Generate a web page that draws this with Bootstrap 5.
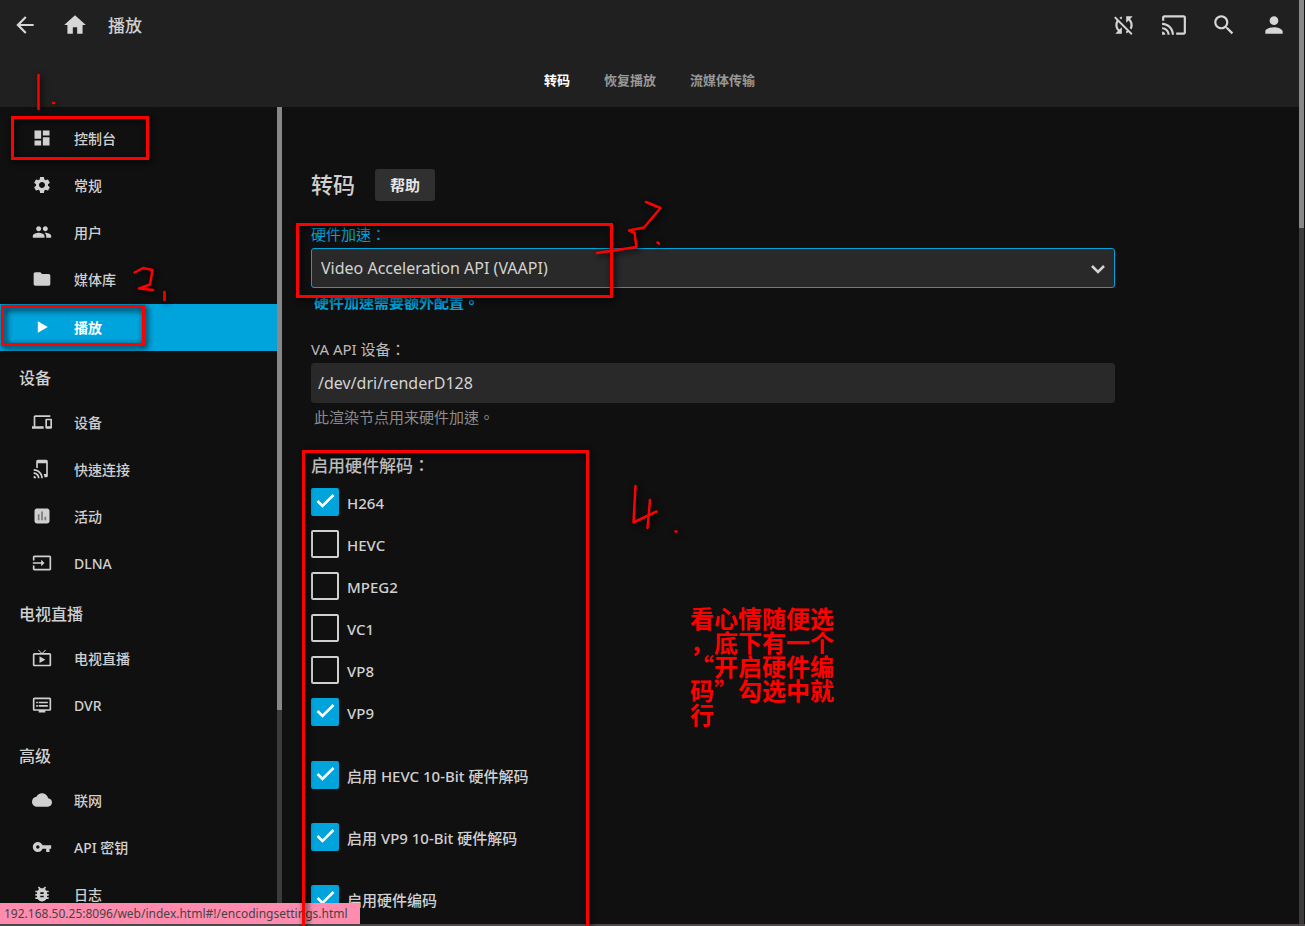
<!DOCTYPE html>
<html lang="zh-TW">
<head>
<meta charset="utf-8">
<meta name="viewport" content="width=device-width, initial-scale=1">
<title>播放</title>
<link href="https://cdn.jsdelivr.net/npm/bootstrap@5.3.0/dist/css/bootstrap.min.css" rel="stylesheet">
<script src="https://cdn.jsdelivr.net/npm/bootstrap@5.3.0/dist/js/bootstrap.bundle.min.js"></script>
<style>
  :root { --accent: #00a4dc; --ink: #d0d0d0; --field: #292929; }
  body { font-family: "Noto Sans", "Noto Sans CJK TC", sans-serif; background: #101010; color: var(--ink); font-size: 15px; line-height: 20px; }
  svg.ico { fill: currentColor; display: block; flex: none; }
  .topbar { background: #202020; height: 107px; }
  .topbar .tool { display: grid; place-items: center; width: 50px; height: 49px; background: none; border: 0; color: #d6d6d6; }
  .topbar h1 { font-size: 17px; line-height: 24px; padding-top: 3px; }
  .tabs a { color: #989898; font-size: 13px; font-weight: 700; padding: 21px 17px 0; text-decoration: none; }
  .tabs a.active { color: #fff; }
  .side { width: 277px; padding-top: 8px; }
  .side a { height: 47px; padding-left: 32px; gap: 22px; color: var(--ink); font-size: 14px; font-weight: 500; text-decoration: none; }
  .side a svg { margin-bottom: 2px; }
  .side a.active { background: var(--accent); color: #fff; font-weight: 700; margin-top: 1px; }
  .side h2 { height: 48px; margin: 0; padding: 6px 0 0 19px; font-size: 16px; font-weight: 500; line-height: 42px; }
  .track { width: 5px; background: #3b3b3b; flex: none; }
  .thumb { background: #888; }
  .thumb-side { height: 603px; }
  .thumb-page { height: 228px; }
  .edge { width: 1px; background: #111; flex: none; }
  .settings { padding: 62px 29px 0; }
  .settings form { max-width: 804px; }
  .settings h2 { font-size: 22px; font-weight: 500; line-height: 30px; }
  .btn-help { background: #303030; color: #e6e6e6; border: 0; border-radius: 3px; font-size: 15px; font-weight: 700; line-height: 20px; padding: 6px 15px; }
  .field-first { margin-top: 23px; }
  .field { margin-bottom: 27px; }
  .field label { display: block; margin-bottom: 4px; color: #bbb; }
  .field.focus label, .field.focus .hint { color: var(--accent); }
  .field.focus .hint { font-weight: 700; }
  .field .box { display: block; width: 100%; height: 40px; background: var(--field); color: #d4d4d4; border: 1px solid var(--field); border-radius: 3px; font-size: 16px; padding: 0 6px; outline: 0; appearance: none; }
  .field.focus .box { border-color: var(--accent); padding: 0 9px; }
  .chev { right: 9px; top: 13px; }
  .hint { margin: 4px 0 0 3px; color: #8c8c8c; }
  legend { font-size: 17px; font-weight: 500; line-height: 20px; margin: 2px 0 12px; color: #bdbdbd; }
  .codec { height: 28px; margin-bottom: 14px; gap: 8px; }
  .codec input { appearance: none; width: 28px; height: 28px; flex: none; margin: 0; border: 2px solid var(--ink); border-radius: 2px; }
  .codec input:checked { border: 0; background: var(--accent) url("data:image/svg+xml,%3Csvg xmlns='http://www.w3.org/2000/svg' viewBox='0 0 28 28'%3E%3Cpath d='M6.5 13l5 5L22.500 7' fill='none' stroke='%23fff' stroke-width='2.500'/%3E%3C/svg%3E"); }
  .codec label { padding-top: 2px; font-weight: 500; }
  .codecs { margin-bottom: 21px; }
  .codec.wide { margin-bottom: 34px; }
  .statusline { left: 0; bottom: 0; width: 100%; height: 2px; background: #4c484a; }
  .linktip { left: 0; bottom: 2px; min-width: 360px; background: #ff8cae; color: #444; font-size: 12px; line-height: 21px; padding: 0 7px 0 4px; white-space: nowrap; }
  .marks { left: 0; top: 0; width: 700px; height: 100%; pointer-events: none; fill: none; stroke: #f00; stroke-width: 3px; stroke-linecap: round; stroke-linejoin: round; filter: drop-shadow(2px 2px 3px #000); }
  .note { left: 690px; top: 606px; color: #f00; font: 700 24px/24px "Noto Sans CJK SC", sans-serif; white-space: nowrap; }
</style>
</head>
<body class="vh-100 overflow-hidden position-relative d-flex">

<div class="flex-grow-1 d-flex flex-column vh-100">
  <header class="topbar flex-shrink-0">
    <div class="d-flex align-items-center">
      <button class="tool p-0" aria-label="返回"><svg class="ico" width="26" height="26" viewBox="0 0 24 24"><path d="M20 11H7.830l5.590-5.590L12 4l-8 8 8 8 1.410-1.410L7.830 13H20z"/></svg></button>
      <button class="tool p-0" aria-label="首页"><svg class="ico" width="26" height="26" viewBox="0 0 24 24"><path d="M10 20v-6h4v6h5v-8h3L12 3 2 12h3v8z"/></svg></button>
      <h1 class="mb-0 ms-2 flex-grow-1 fw-medium">播放</h1>
      <button class="tool p-0" aria-label="同步播放"><svg class="ico" width="26" height="26" viewBox="0 0 24 24"><path d="M10 6.350V4.260c-.8.210-1.550.540-2.230.960l1.460 1.460c.250-.120.500-.240.770-.330zm-7.140-.940l2.360 2.360C4.450 8.990 4 10.440 4 12c0 2.210.910 4.200 2.360 5.640L4 20h6v-6l-2.240 2.240C6.680 15.150 6 13.660 6 12c0-1 .250-1.940.680-2.770l8.080 8.080c-.250.130-.500.250-.770.340v2.090c.8-.210 1.550-.540 2.230-.960l2.360 2.360 1.270-1.270L4.140 4.140 2.860 5.410zM20 4h-6v6l2.240-2.240C17.320 8.850 18 10.340 18 12c0 1-.250 1.940-.680 2.770l1.460 1.460C19.550 15.010 20 13.560 20 12c0-2.210-.910-4.200-2.360-5.640L20 4z"/></svg></button>
      <button class="tool p-0" aria-label="投屏"><svg class="ico" width="26" height="26" viewBox="0 0 24 24"><path d="M21 3H3c-1.100 0-2 .9-2 2v3h2V5h18v14h-7v2h7c1.100 0 2-.9 2-2V5c0-1.100-.9-2-2-2zM1 18v3h3c0-1.660-1.340-3-3-3zm0-4v2c2.760 0 5 2.240 5 5h2c0-3.870-3.130-7-7-7zm0-4v2c4.970 0 9 4.030 9 9h2c0-6.080-4.930-11-11-11z"/></svg></button>
      <button class="tool p-0" aria-label="搜索"><svg class="ico" width="26" height="26" viewBox="0 0 24 24"><path d="M15.500 14h-.790l-.280-.270C15.410 12.590 16 11.110 16 9.500 16 5.910 13.090 3 9.500 3S3 5.910 3 9.500 5.910 16 9.500 16c1.610 0 3.090-.590 4.230-1.570l.270.280v.790l5 4.990L20.490 19l-4.990-5zm-6 0C7.010 14 5 11.990 5 9.500S7.010 5 9.500 5 14 7.010 14 9.500 11.990 14 9.500 14z"/></svg></button>
      <button class="tool p-0" aria-label="用户"><svg class="ico" width="26" height="26" viewBox="0 0 24 24"><path d="M12 12c2.210 0 4-1.790 4-4s-1.790-4-4-4-4 1.790-4 4 1.790 4 4 4zm0 2c-2.670 0-8 1.340-8 4v2h16v-2c0-2.660-5.330-4-8-4z"/></svg></button>
    </div>
    <nav class="tabs d-flex justify-content-center">
      <a href="#" class="active">转码</a><a href="#">恢复播放</a><a href="#">流媒体传输</a>
    </nav>
  </header>

  <div class="d-flex flex-grow-1 overflow-hidden">
    <nav class="side flex-shrink-0 overflow-hidden">
      <a href="#" class="d-flex align-items-center"><svg class="ico" width="20" height="20" viewBox="0 0 24 24"><path d="M3 13h8V3H3v10zm0 8h8v-6H3v6zm10 0h8V11h-8v10zm0-18v6h8V3h-8z"/></svg>控制台</a>
      <a href="#" class="d-flex align-items-center"><svg class="ico" width="20" height="20" viewBox="0 0 24 24"><path d="M19.140 12.940c.040-.3.060-.610.060-.940 0-.320-.020-.640-.070-.940l2.030-1.580c.180-.140.230-.410.120-.610l-1.920-3.320c-.120-.220-.370-.290-.590-.220l-2.390.960c-.5-.380-1.030-.7-1.620-.940l-.360-2.540c-.040-.240-.240-.410-.480-.410h-3.840c-.240 0-.430.170-.470.410l-.360 2.540c-.590.240-1.130.570-1.620.940l-2.390-.960c-.220-.080-.470 0-.590.220L2.740 8.870c-.120.210-.080.470.120.610l2.030 1.580c-.050.3-.090.630-.090.940s.020.640.070.940l-2.030 1.580c-.180.140-.230.410-.120.610l1.920 3.320c.120.220.370.290.590.220l2.390-.960c.5.380 1.030.7 1.620.940l.360 2.540c.050.240.240.410.480.410h3.840c.240 0 .440-.170.470-.410l.360-2.540c.590-.240 1.130-.560 1.620-.940l2.390.960c.220.080.470 0 .590-.220l1.920-3.320c.120-.220.070-.470-.120-.610l-2.010-1.580zM12 15.600c-1.980 0-3.600-1.620-3.600-3.600s1.620-3.600 3.600-3.600 3.600 1.620 3.600 3.600-1.620 3.600-3.600 3.600z"/></svg>常规</a>
      <a href="#" class="d-flex align-items-center"><svg class="ico" width="20" height="20" viewBox="0 0 24 24"><path d="M16 11c1.660 0 2.990-1.340 2.990-3S17.660 5 16 5c-1.660 0-3 1.340-3 3s1.340 3 3 3zm-8 0c1.660 0 2.990-1.340 2.990-3S9.660 5 8 5C6.340 5 5 6.340 5 8s1.340 3 3 3zm0 2c-2.330 0-7 1.170-7 3.500V19h14v-2.500c0-2.330-4.670-3.500-7-3.500zm8 0c-.290 0-.620.020-.970.050 1.160.840 1.970 1.970 1.970 3.450V19h6v-2.500c0-2.330-4.670-3.500-7-3.500z"/></svg>用户</a>
      <a href="#" class="d-flex align-items-center"><svg class="ico" width="20" height="20" viewBox="0 0 24 24"><path d="M10 4H4c-1.100 0-1.990.9-1.990 2L2 18c0 1.100.9 2 2 2h16c1.100 0 2-.9 2-2V8c0-1.100-.9-2-2-2h-8l-2-2z"/></svg>媒体库</a>
      <a href="#" class="d-flex align-items-center active"><svg class="ico" width="20" height="20" viewBox="0 0 24 24"><path d="M7 5v14l12-7z"/></svg>播放</a>
      <h2>设备</h2>
      <a href="#" class="d-flex align-items-center"><svg class="ico" width="20" height="20" viewBox="0 0 24 24"><path d="M4 6h18V4H4c-1.100 0-2 .9-2 2v11H0v3h14v-3H4V6zm19 2h-6c-.550 0-1 .450-1 1v10c0 .550.450 1 1 1h6c.550 0 1-.450 1-1V9c0-.550-.450-1-1-1zm-1 9h-4v-7h4v7z"/></svg>设备</a>
      <a href="#" class="d-flex align-items-center"><svg class="ico" width="20" height="20" viewBox="0 0 24 24"><path d="M2 16v2c2.760 0 5 2.240 5 5h2c0-3.870-3.130-7-7-7zm0 4v3h3c0-1.660-1.340-3-3-3zm0-8v2c4.970 0 9 4.030 9 9h2c0-6.080-4.920-11-11-11zM17 1.010L7 1c-1.100 0-2 .9-2 2v7.370c.690.160 1.360.370 2 .640V5h10v13h-3.030c.520 1.250.840 2.590.950 4H17c1.100 0 2-.9 2-2V3c0-1.100-.9-1.990-2-1.990z"/></svg>快速连接</a>
      <a href="#" class="d-flex align-items-center"><svg class="ico" width="20" height="20" viewBox="0 0 24 24"><path fill="#777" d="M6 7h12v11H6z"/><path d="M18 3H6C4.300 3 3 4.300 3 6v12c0 1.700 1.300 3 3 3h12c1.700 0 3-1.300 3-3V6c0-1.700-1.300-3-3-3zM9 17H7v-7h2v7zm4 0h-2V7h2v10zm4 0h-2v-4h2v4z"/></svg>活动</a>
      <a href="#" class="d-flex align-items-center"><svg class="ico" width="20" height="20" viewBox="0 0 24 24"><path d="M21 3.010H3c-1.100 0-2 .9-2 2V9h2V4.990h18v14.030H3V15H1v4.010c0 1.100.9 1.980 2 1.980h18c1.100 0 2-.880 2-1.980v-14c0-1.110-.9-2-2-2zM11 16l4-4-4-4v3H1v2h10v3z"/></svg>DLNA</a>
      <h2>电视直播</h2>
      <a href="#" class="d-flex align-items-center"><svg class="ico" width="20" height="20" viewBox="0 0 24 24"><path d="M21 6h-7.590l3.290-3.290L16 2l-4 4-4-4-.7.710L10.590 6H3c-1.100 0-2 .890-2 2v12c0 1.100.9 2 2 2h18c1.100 0 2-.9 2-2V8c0-1.110-.9-2-2-2zm0 14H3V8h18v12zM9 10v8l7-4z"/></svg>电视直播</a>
      <a href="#" class="d-flex align-items-center"><svg class="ico" width="20" height="20" viewBox="0 0 24 24"><path d="M21 3H3c-1.100 0-2 .9-2 2v12c0 1.100.9 2 2 2h5v2h8v-2h5c1.100 0 1.990-.9 1.990-2L23 5c0-1.100-.9-2-2-2zm0 14H3V5h18v12zm-2-9H8v2h11V8zm0 4H8v2h11v-2zM7 8H5v2h2V8zm0 4H5v2h2v-2z"/></svg>DVR</a>
      <h2>高级</h2>
      <a href="#" class="d-flex align-items-center"><svg class="ico" width="20" height="20" viewBox="0 0 24 24"><path d="M19.350 10.040C18.670 6.590 15.640 4 12 4 9.110 4 6.600 5.640 5.350 8.040 2.340 8.360 0 10.910 0 14c0 3.310 2.690 6 6 6h13c2.760 0 5-2.240 5-5 0-2.640-2.050-4.780-4.650-4.960z"/></svg>联网</a>
      <a href="#" class="d-flex align-items-center"><svg class="ico" width="20" height="20" viewBox="0 0 24 24"><path d="M12.650 10C11.830 7.670 9.610 6 7 6c-3.310 0-6 2.690-6 6s2.690 6 6 6c2.610 0 4.830-1.670 5.650-4H17v4h4v-4h2v-4H12.650zM7 14c-1.100 0-2-.9-2-2s.9-2 2-2 2 .9 2 2-.9 2-2 2z"/></svg>API 密钥</a>
      <a href="#" class="d-flex align-items-center"><svg class="ico" width="20" height="20" viewBox="0 0 24 24"><path d="M20 8h-2.810c-.450-.780-1.070-1.450-1.820-1.960L17 4.410 15.590 3l-2.170 2.170C12.960 5.060 12.490 5 12 5c-.490 0-.960.060-1.410.170L8.410 3 7 4.410l1.620 1.630C7.880 6.550 7.260 7.220 6.810 8H4v2h2.090c-.050.330-.090.660-.090 1v1H4v2h2v1c0 .340.040.670.090 1H4v2h2.810c1.040 1.790 2.970 3 5.190 3s4.150-1.210 5.190-3H20v-2h-2.090c.050-.330.090-.660.090-1v-1h2v-2h-2v-1c0-.340-.040-.670-.090-1H20V8zm-6 8h-4v-2h4v2zm0-4h-4v-2h4v2z"/></svg>日志</a>
    </nav>
    <div class="track"><div class="thumb thumb-side"></div></div>

    <main class="settings flex-grow-1 overflow-hidden">
      <form>
        <div class="d-flex align-items-start">
          <h2 class="mb-0 me-3 pe-1">转码</h2>
          <button type="button" class="btn btn-help">帮助</button>
        </div>
        <div class="field field-first focus">
          <label for="accel">硬件加速：</label>
          <div class="position-relative">
            <select id="accel" class="box"><option>Video Acceleration API (VAAPI)</option></select>
            <svg class="chev position-absolute" width="16" height="16" viewBox="0 0 16 16" fill="none" stroke="#d4d4d4" stroke-width="2.500"><path d="M2 5l6 6 6-6"/></svg>
          </div>
          <p class="hint">硬件加速需要额外配置。</p>
        </div>
        <div class="field">
          <label for="dev">VA API 设备：</label>
          <input id="dev" class="box" type="text" value="/dev/dri/renderD128">
          <p class="hint">此渲染节点用来硬件加速。</p>
        </div>
        <fieldset class="codecs">
          <legend>启用硬件解码：</legend>
          <div class="codec d-flex align-items-center"><input type="checkbox" id="c1" checked><label for="c1">H264</label></div>
          <div class="codec d-flex align-items-center"><input type="checkbox" id="c2"><label for="c2">HEVC</label></div>
          <div class="codec d-flex align-items-center"><input type="checkbox" id="c3"><label for="c3">MPEG2</label></div>
          <div class="codec d-flex align-items-center"><input type="checkbox" id="c4"><label for="c4">VC1</label></div>
          <div class="codec d-flex align-items-center"><input type="checkbox" id="c5"><label for="c5">VP8</label></div>
          <div class="codec d-flex align-items-center"><input type="checkbox" id="c6" checked><label for="c6">VP9</label></div>
        </fieldset>
        <div class="codec wide d-flex align-items-center"><input type="checkbox" id="c7" checked><label for="c7">启用 HEVC 10-Bit 硬件解码</label></div>
        <div class="codec wide d-flex align-items-center"><input type="checkbox" id="c8" checked><label for="c8">启用 VP9 10-Bit 硬件解码</label></div>
        <div class="codec wide d-flex align-items-center"><input type="checkbox" id="c9" checked><label for="c9">启用硬件编码</label></div>
      </form>
    </main>
  </div>
</div>
<div class="track"><div class="thumb thumb-page"></div></div>
<div class="edge"></div>

<div class="statusline position-absolute"></div>
<div class="linktip position-absolute">192.168.50.25:8096/web/index.html#!/encodingsettings.html</div>

<!-- hand-drawn walkthrough marks over the page -->
<svg class="marks position-absolute" aria-hidden="true">
  <g stroke-linejoin="miter">
    <rect x="12.500" y="117.500" width="135" height="41"/>
    <rect x="2.500" y="306.500" width="141" height="38"/>
    <rect x="297.500" y="224.500" width="314" height="72"/>
    <path d="M303.500 930V451.500H587.500V930"/>
  </g>
  <g stroke-width="2.500">
    <path d="M38.500 75V109M53 103h1"/>
    <path d="M134.500 272.500L143 268l9.500 2-2.500 14.500-11 4 14 1.500M164.500 292v8"/>
    <path d="M646 202l14.500 6L644 227.500l-15 3 5.500 2.500 2 14L597 253M657.500 242.500l1.500 1"/>
    <path d="M635.500 486l-2 36.500 23-11M650 500l-2.500 28M675.500 531.500h1"/>
  </g>
</svg>
<div class="note position-absolute" lang="zh-CN">看心情随便选<br>，底下有一个<br>“开启硬件编<br>码”勾选中就<br>行</div>
</body>
</html>
